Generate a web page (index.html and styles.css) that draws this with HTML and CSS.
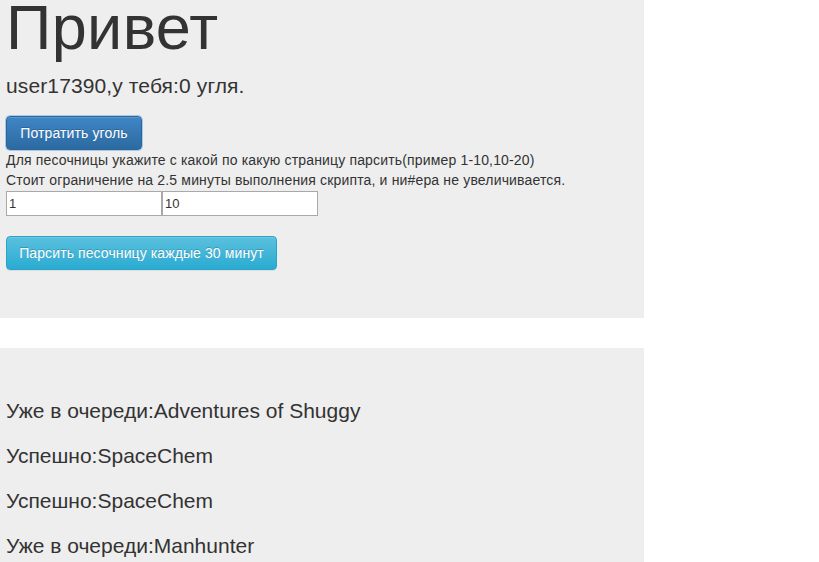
FILE: index.html
```html
<!DOCTYPE html>
<html lang="ru">
<head>
<meta charset="utf-8">
<title>Привет</title>
<link rel="stylesheet" href="styles.css">
</head>
<body>
<div class="page">
  <section class="jumbotron top">
    <h1 class="title">Привет</h1>
    <p class="lead">user17390,у тебя:0 угля.</p>
    <button class="btn btn-primary" type="button">Потратить уголь</button>
    <div class="note">
      <div>Для песочницы укажите с какой по какую страницу парсить(пример 1-10,10-20)</div>
      <div>Стоит ограничение на 2.5 минуты выполнения скрипта, и ни#ера не увеличивается.</div>
    </div>
    <div class="inputs">
      <input class="field" type="text" value="1">
      <input class="field" type="text" value="10">
    </div>
    <button class="btn btn-info" type="button">Парсить песочницу каждые 30 минут</button>
  </section>
  <section class="jumbotron log">
    <p class="lead item">Уже в очереди:Adventures of Shuggy</p>
    <p class="lead item">Успешно:SpaceChem</p>
    <p class="lead item">Успешно:SpaceChem</p>
    <p class="lead item">Уже в очереди:Manhunter</p>
  </section>
</div>
</body>
</html>
```
FILE: styles.css
```css
html, body {
  margin: 0;
  padding: 0;
  background: #fff;
}
body {
  font-family: "Liberation Sans", Arial, sans-serif;
  font-size: 14px;
  line-height: 20px;
  color: #333;
  overflow: hidden;
}
.page {
  width: 644px;
}
.jumbotron {
  background: #eeeeee;
  padding: 0 6px 48px 6px;
  margin-bottom: 30px;
}
.jumbotron.log {
  padding-top: 48px;
}
.title {
  margin: 0;
  font-size: 63px;
  line-height: 54px;
  font-weight: 500;
  letter-spacing: 0.4px;
  color: #333;
}
.lead {
  margin: 17px 0 15px 0;
  font-size: 21px;
  line-height: 30px;
  font-weight: 400;
  letter-spacing: 0.12px;
}
.item {
  margin: 0 0 15px 0;
  letter-spacing: 0;
}
.btn {
  display: block;
  font-family: "Liberation Sans", Arial, sans-serif;
  font-size: 14px;
  line-height: 20px;
  padding: 6px 12px;
  border-radius: 4px;
  color: #fff;
  cursor: pointer;
  text-shadow: 0 -1px 0 rgba(0,0,0,0.2);
  letter-spacing: 0.1px;
}
.btn-primary {
  height: 34px;
  width: 136px;
  background: linear-gradient(to bottom, #3f86c6 0%, #2c6aa1 100%);
  border: 1px solid #2b669a;
  box-shadow: 0 0 0 1px rgba(120,170,225,0.55), inset 0 1px 0 rgba(255,255,255,0.15);
  margin: 0;
}
.btn-info {
  height: 34px;
  width: 271px;
  padding: 6px 12px;
  background: linear-gradient(to bottom, #5bc0de 0%, #2aabd2 100%);
  border: 1px solid #28a4c9;
  box-shadow: inset 0 1px 0 rgba(255,255,255,0.15), 0 1px 1px rgba(0,0,0,0.075);
  margin-top: 20px;
}
.note {
  font-size: 14px;
  line-height: 20px;
  letter-spacing: 0.16px;
}
.inputs {
  display: flex;
  margin-top: 1px;
}
.field {
  box-sizing: border-box;
  width: 156px;
  height: 25px;
  margin: 0;
  padding: 1px 2px;
  border: 1px solid #a9a9a9;
  background: #fff;
  font-family: "Liberation Sans", Arial, sans-serif;
  font-size: 13px;
  color: #333;
  outline: none;
}
```
